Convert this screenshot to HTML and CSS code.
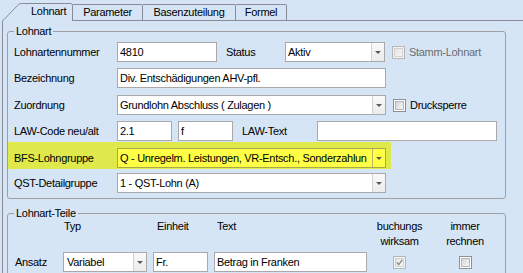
FILE: index.html
```html
<!DOCTYPE html>
<html lang="de">
<head>
<meta charset="utf-8">
<title>Lohnart</title>
<link rel="stylesheet" href="styles.css">
</head>
<body>
<div class="tabs">
  <div class="tab active">
    <svg class="tab-shape" width="71" height="18" viewBox="0 0 71 18"><path d="M0.5 18 L15.5 2.5 Q17 0.5 19.5 0.5 L68.5 0.5 Q70.5 0.5 70.5 2.5 L70.5 18" fill="#d6e5f5" stroke="#898c95"/></svg>
    <span class="tab-label">Lohnart</span>
  </div>
  <div class="tab tab-param">Parameter</div>
  <div class="tab tab-basen">Basenzuteilung</div>
  <div class="tab tab-formel">Formel</div>
  <div class="tab-rest"></div>
</div>
<div class="page">
  <fieldset class="group g1">
    <legend>Lohnart</legend>
    <div class="row r1">
      <span class="lbl">Lohnartennummer</span>
      <input class="in w100" type="text" value="4810">
      <span class="lbl-status">Status</span>
      <div class="combo w100"><span class="combo-text">Aktiv</span><span class="combo-btn"><i class="tri"></i></span></div>
      <span class="cb disabled"><span class="cb-in"></span></span>
      <span class="cb-label disabled-text">Stamm-Lohnart</span>
    </div>
    <div class="row r2">
      <span class="lbl">Bezeichnung</span>
      <input class="in w269" type="text" value="Div. Entschädigungen AHV-pfl.">
    </div>
    <div class="row r3">
      <span class="lbl">Zuordnung</span>
      <div class="combo w269"><span class="combo-text">Grundlohn Abschluss ( Zulagen )</span><span class="combo-btn"><i class="tri"></i></span></div>
      <span class="cb"><span class="cb-in"></span></span>
      <span class="cb-label">Drucksperre</span>
    </div>
    <div class="row r4">
      <span class="lbl">LAW-Code neu/alt</span>
      <input class="in w55" type="text" value="2.1">
      <input class="in w55 gap6" type="text" value="f">
      <span class="lbl-law">LAW-Text</span>
      <input class="in w180" type="text" value="">
    </div>
    <div class="row band">
      <span class="lbl">BFS-Lohngruppe</span>
      <div class="combo w269 yellow"><span class="combo-text">Q - Unregelm. Leistungen, VR-Entsch., Sonderzahlun</span><span class="combo-btn"><i class="tri"></i></span></div>
    </div>
    <div class="row r6">
      <span class="lbl">QST-Detailgruppe</span>
      <div class="combo w269"><span class="combo-text">1 - QST-Lohn (A)</span><span class="combo-btn"><i class="tri"></i></span></div>
    </div>
  </fieldset>

  <fieldset class="group g2">
    <legend>Lohnart-Teile</legend>
    <div class="parts">
      <span class="h h-typ">Typ</span>
      <span class="h h-einheit">Einheit</span>
      <span class="h h-text">Text</span>
      <span class="h h-c">buchungs<br>wirksam</span>
      <span class="h h-c">immer<br>rechnen</span>

      <span class="p-lbl">Ansatz</span>
      <div class="combo"><span class="combo-text">Variabel</span><span class="combo-btn"><i class="tri"></i></span></div>
      <input class="in" type="text" value="Fr.">
      <input class="in" type="text" value="Betrag in Franken">
      <span class="cb disabled center"><span class="cb-in"><svg width="7" height="7" viewBox="0 0 7 7"><path d="M0.8 3.6 L2.7 5.6 L6.3 0.8" fill="none" stroke="#8d8d8d" stroke-width="1.4"/></svg></span></span>
      <span class="cb center"><span class="cb-in"></span></span>
    </div>
  </fieldset>
</div>
</body>
</html>
```

FILE: styles.css
```css
* { box-sizing: border-box; }

html, body {
  margin: 0;
  padding: 0;
}

body {
  width: 523px;
  height: 273px;
  overflow: hidden;
  background: #d6e5f5;
  font-family: "Liberation Sans", Arial, sans-serif;
  font-size: 11px;
  letter-spacing: -0.3px;
  color: #000;
}

/* ---------- tabs ---------- */
.tabs {
  display: flex;
  align-items: flex-end;
  height: 21px;
  padding-left: 2px;
}

.tab {
  flex: none;
  height: 17px;
  border-top: 1px solid #898c95;
  border-right: 1px solid #898c95;
  border-bottom: 1px solid #898c95;
  border-radius: 0 2px 0 0;
  text-align: center;
  line-height: 15px;
}

.tab.active {
  position: relative;
  width: 71px;
  height: 18px;
  border: none;
  padding-left: 29px;
  text-align: left;
  line-height: 17px;
}

.tab-shape {
  position: absolute;
  left: 0;
  top: 0;
}

.tab-label { position: relative; }

.tab-param { width: 70px; }
.tab-basen { width: 93px; }
.tab-formel { width: 51px; }

.tab-rest {
  flex: 1;
  height: 1px;
  border-bottom: 1px solid #898c95;
}

/* ---------- page ---------- */
.page {
  margin-left: 2px;
  height: 252px;
  overflow: hidden;
  border-left: 1px solid #898c95;
  padding: 4px 0 0 4px;
}

.group {
  margin: 0;
  width: 499px;
  min-width: 0;
  border: 1px solid #a0a0a0;
  border-radius: 3px;
  padding: 5px 0 5px 0;
}

.group legend {
  margin-left: 6px;
  padding: 0 2px;
  line-height: 12px;
}

.group.g2 {
  margin-top: 8px;
  padding-top: 0;
  height: 80px;
}

/* ---------- rows ---------- */
.row {
  display: flex;
  align-items: center;
  height: 20px;
  padding-left: 6px;
}

.r2 { margin-top: 6px; }
.r3 { margin-top: 7px; }
.r4 { margin-top: 6px; }
.r6 { margin-top: 4px; }

.band {
  margin-top: 1px;
  width: 383px;
  height: 27px;
  padding-top: 6px;
  padding-bottom: 1px;
  background: #dfe94b;
}

.lbl {
  flex: none;
  width: 103px;
  white-space: nowrap;
}

.lbl-status {
  flex: none;
  width: 59px;
  margin-left: 9px;
}

.lbl-law {
  flex: none;
  width: 75px;
  margin-left: 9px;
}

/* ---------- controls ---------- */
.in {
  flex: none;
  height: 20px;
  margin: 0;
  border: 1px solid #a9a9a9;
  border-radius: 0;
  background: #fff;
  padding: 0 2px;
  font: inherit;
  letter-spacing: inherit;
  color: #000;
  outline: none;
}

.w55 { width: 55px; }
.w100 { width: 100px; }
.w180 { width: 180px; }
.w269 { width: 269px; }
.gap6 { margin-left: 6px; }

.combo {
  flex: none;
  display: flex;
  height: 20px;
  border: 1px solid #a9a9a9;
  background: #fff;
}

.combo-text {
  flex: 1;
  min-width: 0;
  overflow: hidden;
  white-space: nowrap;
  padding-left: 2px;
  line-height: 18px;
}

.combo-btn {
  flex: none;
  width: 13px;
  display: flex;
  align-items: center;
  justify-content: center;
  border-left: 1px solid #d2d2d2;
  background: linear-gradient(#f9f9f9, #ececec);
}

.tri {
  width: 0;
  height: 0;
  border-left: 3px solid transparent;
  border-right: 3px solid transparent;
  border-top: 3px solid #5a5a5a;
}

.combo.yellow {
  background: #ffff45;
  border-color: #a9a94c;
}

.combo.yellow .combo-btn {
  background: #ffff45;
  border-left-color: #b8b860;
}

/* ---------- checkboxes ---------- */
.cb {
  flex: none;
  width: 13px;
  height: 13px;
  margin-left: 7px;
  border: 1px solid #8e8f8f;
  padding: 1px;
  background: #fff;
}

.cb-in {
  display: flex;
  align-items: center;
  justify-content: center;
  width: 9px;
  height: 9px;
  border: 1px solid #b4b6b9;
  background: linear-gradient(135deg, #d3d5d8, #f5f6f7);
}

.cb.disabled {
  border-color: #b6b6b6;
  background: #f4f4f4;
}

.cb.disabled .cb-in {
  border-color: #d2d2d2;
  background: linear-gradient(135deg, #e4e4e4, #f6f6f6);
}

.cb-label {
  margin-left: 4px;
  white-space: nowrap;
}

.disabled-text { color: #6d6d6d; }

/* ---------- parts grid ---------- */
.parts {
  display: grid;
  grid-template-columns: 49px 84px 55px 153px 53px 66px;
  grid-template-rows: 30px 20px;
  column-gap: 6px;
  row-gap: 3px;
  line-height: 15px;
}

.h { align-self: start; }
.h-typ { grid-column: 2; padding-left: 1px; }
.h-einheit { grid-column: 3; padding-left: 4px; }
.h-text { grid-column: 4; padding-left: 3px; }
.h-c {
  justify-self: center;
  text-align: center;
  white-space: nowrap;
}

.p-lbl {
  grid-column: 1;
  padding-left: 7px;
  align-self: center;
}

.parts .in,
.parts .combo {
  width: 100%;
}

.parts .combo-text { padding-left: 3px; }

.cb.center {
  margin: 0;
  justify-self: center;
  align-self: center;
}
```
